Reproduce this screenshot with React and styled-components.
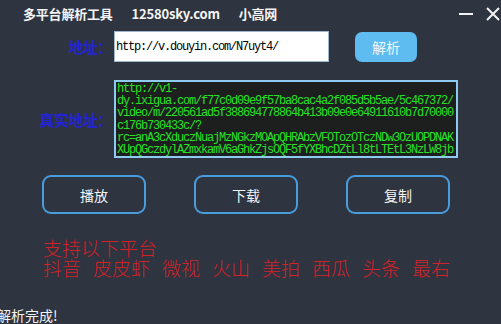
import React from "react";
import styled, { createGlobalStyle } from "styled-components";

const GlobalStyle = createGlobalStyle`
    html, body {
        margin: 0;
        padding: 0;
        background: #2e3440;
    }
`;

const realUrl = [
    "http://v1-",
    "dy.ixigua.com/f77c0d09e9f57ba8cac4a2f085d5b5ae/5c467372/",
    "video/m/220561ad5f388694778864b413b09e0e64911610b7d70000",
    "c176b730433c/?",
    "rc=anA3cXduczNuajMzNGkzMOApQHRAbzVFOTozOTczNDw3OzUOPDNAK",
    "XUpQGczdylAZmxkamV6aGhkZjsOQF5fYXBhcDZtLl8tLTEtL3NzLW8jb",
];

const platforms = ["抖音", "皮皮虾", "微视", "火山", "美拍", "西瓜", "头条", "最右"];

const App = () => {
    return (
        <React.Fragment>
            <GlobalStyle />
            <Window>
                <TitleBar>
                    <TitleText>多平台解析工具</TitleText>
                    <TitleText>12580sky.com</TitleText>
                    <TitleText>小高网</TitleText>
                    <WinButtons>
                        <WinBtn aria-label="minimize">
                            <svg width="16" height="16" viewBox="0 0 16 16">
                                <line x1="1" y1="8" x2="15" y2="8" stroke="#f2f2f2" strokeWidth="2" />
                            </svg>
                        </WinBtn>
                        <WinBtn aria-label="close">
                            <svg width="14" height="14" viewBox="0 0 14 14">
                                <path d="M1 1 L13 13 M13 1 L1 13" stroke="#f2f2f2" strokeWidth="2" />
                            </svg>
                        </WinBtn>
                    </WinButtons>
                </TitleBar>

                <FormRow>
                    <Label>地址：</Label>
                    <UrlInput readOnly value="http://v.douyin.com/N7uyt4/" />
                    <ParseButton>解析</ParseButton>
                </FormRow>

                <FormRow top={18}>
                    <Label>真实地址：</Label>
                    <ResultBox>
                        {realUrl.map((line) => (
                            <div key={line}>{line}</div>
                        ))}
                    </ResultBox>
                </FormRow>

                <ActionRow>
                    <ActionButton>播放</ActionButton>
                    <ActionButton>下载</ActionButton>
                    <ActionButton>复制</ActionButton>
                </ActionRow>

                <Support>
                    <SupportLine>支持以下平台</SupportLine>
                    <SupportLine>
                        {platforms.map((p) => (
                            <span key={p}>{p}</span>
                        ))}
                    </SupportLine>
                </Support>

                <Status>解析完成!</Status>
            </Window>
        </React.Fragment>
    );
};

export default App;

const Window = styled.div`
    width: 501px;
    height: 324px;
    background: #2e3440;
    display: flex;
    flex-direction: column;
    overflow: hidden;
    font-family: "Noto Sans CJK SC", "Noto Sans", sans-serif;
`;

const TitleBar = styled.div`
    height: 31px;
    display: flex;
    align-items: center;
    gap: 19px;
    padding-left: 23px;
    padding-bottom: 4px;
    box-sizing: border-box;
`;

const TitleText = styled.span`
    color: #f4f4f4;
    font-size: 13px;
    font-weight: bold;
    letter-spacing: -0.2px;
`;

const WinButtons = styled.div`
    margin-left: auto;
    display: flex;
    align-items: center;
    gap: 12px;
    padding-right: 1px;
`;

const WinBtn = styled.div`
    display: flex;
    cursor: pointer;
`;

const FormRow = styled.div`
    display: flex;
    align-items: center;
    margin-top: ${(p) => p.top || 0}px;
`;

const Label = styled.div`
    width: 112px;
    text-align: right;
    color: #2323d6;
    font-size: 15px;
    font-weight: bold;
    letter-spacing: -0.5px;
`;

const UrlInput = styled.input`
    margin-left: 2px;
    width: 215px;
    height: 31px;
    box-sizing: border-box;
    border: 1px solid #9fb7cc;
    background: #ffffff;
    padding: 0 1px;
    font-family: "Liberation Mono", monospace;
    font-size: 12px;
    letter-spacing: -1.2px;
    color: #000;
    outline: none;
`;

const ParseButton = styled.button`
    margin-left: 26px;
    width: 62px;
    height: 30px;
    border: none;
    border-radius: 7px;
    background: #5ebcf0;
    color: #eef8ff;
    font-family: "Noto Sans CJK SC", sans-serif;
    font-size: 14px;
    cursor: pointer;
`;

const ResultBox = styled.div`
    margin-left: 2px;
    width: 344px;
    height: 78px;
    box-sizing: border-box;
    border: 2px solid #8ecbf0;
    background: #1c1f1e;
    padding: 1px 0 0 1px;
    font-family: "Liberation Mono", monospace;
    font-size: 12px;
    line-height: 12.2px;
    letter-spacing: -1.2px;
    color: #26e026;
    white-space: pre;
    overflow: hidden;
`;

const ActionRow = styled.div`
    display: flex;
    gap: 48px;
    padding-left: 42px;
    margin-top: 17px;
`;

const ActionButton = styled.button`
    width: 104px;
    height: 39px;
    box-sizing: border-box;
    border: 2px solid #4a9ddc;
    border-radius: 9px;
    background: transparent;
    color: #f4f4f4;
    font-family: "Noto Sans CJK SC", sans-serif;
    font-size: 14px;
    cursor: pointer;
`;

const Support = styled.div`
    margin-top: 24px;
    padding-left: 43px;
    color: #d42128;
    font-size: 19px;
    line-height: 20px;
`;

const SupportLine = styled.div`
    display: flex;
    gap: 12px;
    font-weight: 300;
`;

const Status = styled.div`
    margin-top: auto;
    margin-left: -3px;
    margin-bottom: 1px;
    color: #f4f4f4;
    font-size: 14px;
    line-height: 16px;
`;
